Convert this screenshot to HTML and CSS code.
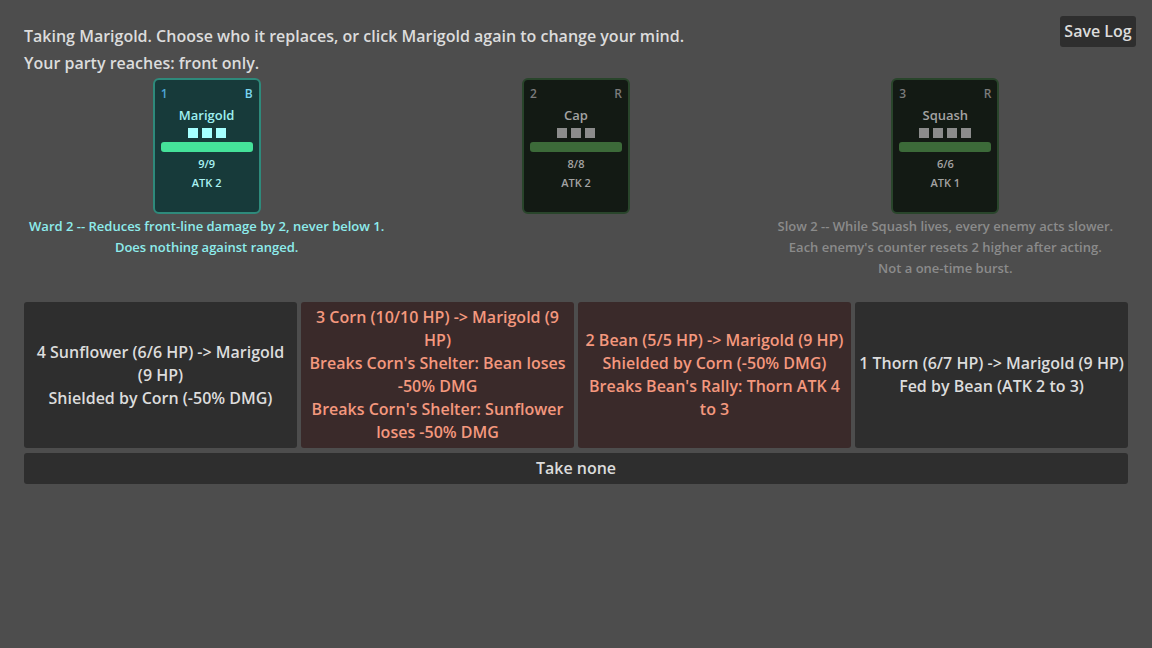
FILE: index.html
```html
<!DOCTYPE html>
<html>
<head>
    <title>Recruit</title>
    <link rel="stylesheet" href="styles.css">
</head>
<body>
    <button class="save-log">Save Log</button>

    <div class="prompt">
        <p class="prompt-line">Taking Marigold. Choose who it replaces, or click Marigold again to change your mind.</p>
        <p class="prompt-line">Your party reaches: front only.</p>
    </div>

    <div class="party">
        <div class="slot">
            <div class="card card-picked">
                <div class="card-top"><span class="card-pos">1</span><span class="card-role">B</span></div>
                <div class="card-name">Marigold</div>
                <div class="pips"><i></i><i></i><i></i></div>
                <div class="hp-bar"></div>
                <div class="card-stat">9/9</div>
                <div class="card-stat">ATK 2</div>
            </div>
            <div class="slot-desc desc-picked">Ward 2 -- Reduces front-line damage by 2, never below 1.<br>Does nothing against ranged.</div>
        </div>

        <div class="slot">
            <div class="card">
                <div class="card-top"><span class="card-pos">2</span><span class="card-role">R</span></div>
                <div class="card-name">Cap</div>
                <div class="pips"><i></i><i></i><i></i></div>
                <div class="hp-bar"></div>
                <div class="card-stat">8/8</div>
                <div class="card-stat">ATK 2</div>
            </div>
        </div>

        <div class="slot">
            <div class="card">
                <div class="card-top"><span class="card-pos">3</span><span class="card-role">R</span></div>
                <div class="card-name">Squash</div>
                <div class="pips"><i></i><i></i><i></i><i></i></div>
                <div class="hp-bar"></div>
                <div class="card-stat">6/6</div>
                <div class="card-stat">ATK 1</div>
            </div>
            <div class="slot-desc">Slow 2 -- While Squash lives, every enemy acts slower.<br>Each enemy's counter resets 2 higher after acting.<br>Not a one-time burst.</div>
        </div>
    </div>

    <div class="targets">
        <button class="target">4 Sunflower (6/6 HP) -&gt; Marigold (9 HP)<br>Shielded by Corn (-50% DMG)</button>
        <button class="target target-warn">3 Corn (10/10 HP) -&gt; Marigold (9 HP)<br>Breaks Corn's Shelter: Bean loses -50% DMG<br>Breaks Corn's Shelter: Sunflower loses -50% DMG</button>
        <button class="target target-warn">2 Bean (5/5 HP) -&gt; Marigold (9 HP)<br>Shielded by Corn (-50% DMG)<br>Breaks Bean's Rally: Thorn ATK 4 to 3</button>
        <button class="target">1 Thorn (6/7 HP) -&gt; Marigold (9 HP)<br>Fed by Bean (ATK 2 to 3)</button>
    </div>

    <button class="take-none">Take none</button>
</body>
</html>
```

FILE: styles.css
```css
body {
    margin: 0;
    padding: 25px 24px 24px;
    background: #4d4d4d;
    color: #dcdcdc;
    font-family: "Open Sans", "Noto Sans", sans-serif;
    font-weight: 600;
    font-size: 16px;
}
button {
    font-family: inherit;
    font-weight: 600;
    font-size: 16px;
    color: #dcdcdc;
    background: #2e2e2e;
    border: none;
    border-radius: 3px;
    padding: 4px;
    line-height: 23px;
    cursor: pointer;
}
.save-log {
    position: absolute;
    top: 16px;
    right: 16px;
    width: 76px;
    height: 31px;
}
.prompt {
    display: flex;
    flex-direction: column;
    gap: 4px;
}
.prompt-line {
    margin: 0;
    line-height: 23px;
}
.party {
    display: grid;
    grid-template-columns: repeat(3, 1fr);
    gap: 4px;
    margin-top: 3px;
}
.slot {
    display: flex;
    flex-direction: column;
    align-items: center;
}
.card {
    box-sizing: border-box;
    width: 108px;
    height: 136px;
    padding: 6px;
    border: 2px solid #29452b;
    border-radius: 6px;
    background: #131a14;
    display: flex;
    flex-direction: column;
    align-items: center;
    gap: 4px;
    color: #a3a3a3;
}
.card-top {
    align-self: stretch;
    display: flex;
    justify-content: space-between;
    font-size: 12px;
    line-height: 16px;
    color: #7b7b7b;
}
.card-name {
    font-size: 13px;
    line-height: 18px;
}
.pips {
    display: flex;
    gap: 4px;
}
.pips i {
    width: 10px;
    height: 10px;
    background: #8c8c8c;
}
.hp-bar {
    align-self: stretch;
    height: 10px;
    border-radius: 3px;
    background: #3c6a39;
}
.card-stat {
    font-size: 11px;
    line-height: 15px;
}
.card-picked {
    border-color: #2e8a7b;
    background: #173a3a;
    color: #aaf2f2;
}
.card-picked .card-pos {
    color: #4ea6d6;
}
.card-picked .card-role {
    color: #7cd6f0;
}
.card-picked .card-name {
    color: #9ef0f0;
}
.card-picked .pips i {
    background: #a6ffff;
}
.card-picked .hp-bar {
    background: #45e29a;
}
.slot-desc {
    margin-top: 2px;
    font-size: 13px;
    line-height: 21px;
    text-align: center;
    color: #8b8b8b;
}
.desc-picked {
    color: #8eecec;
}
.targets {
    display: grid;
    grid-template-columns: repeat(4, 1fr);
    gap: 4px;
    margin-top: 23px;
}
.target {
    min-height: 145px;
    text-align: center;
}
.target-warn {
    background: #3a2a2a;
    color: #f4987e;
}
.take-none {
    display: block;
    width: 100%;
    height: 31px;
    margin-top: 5px;
}
```
